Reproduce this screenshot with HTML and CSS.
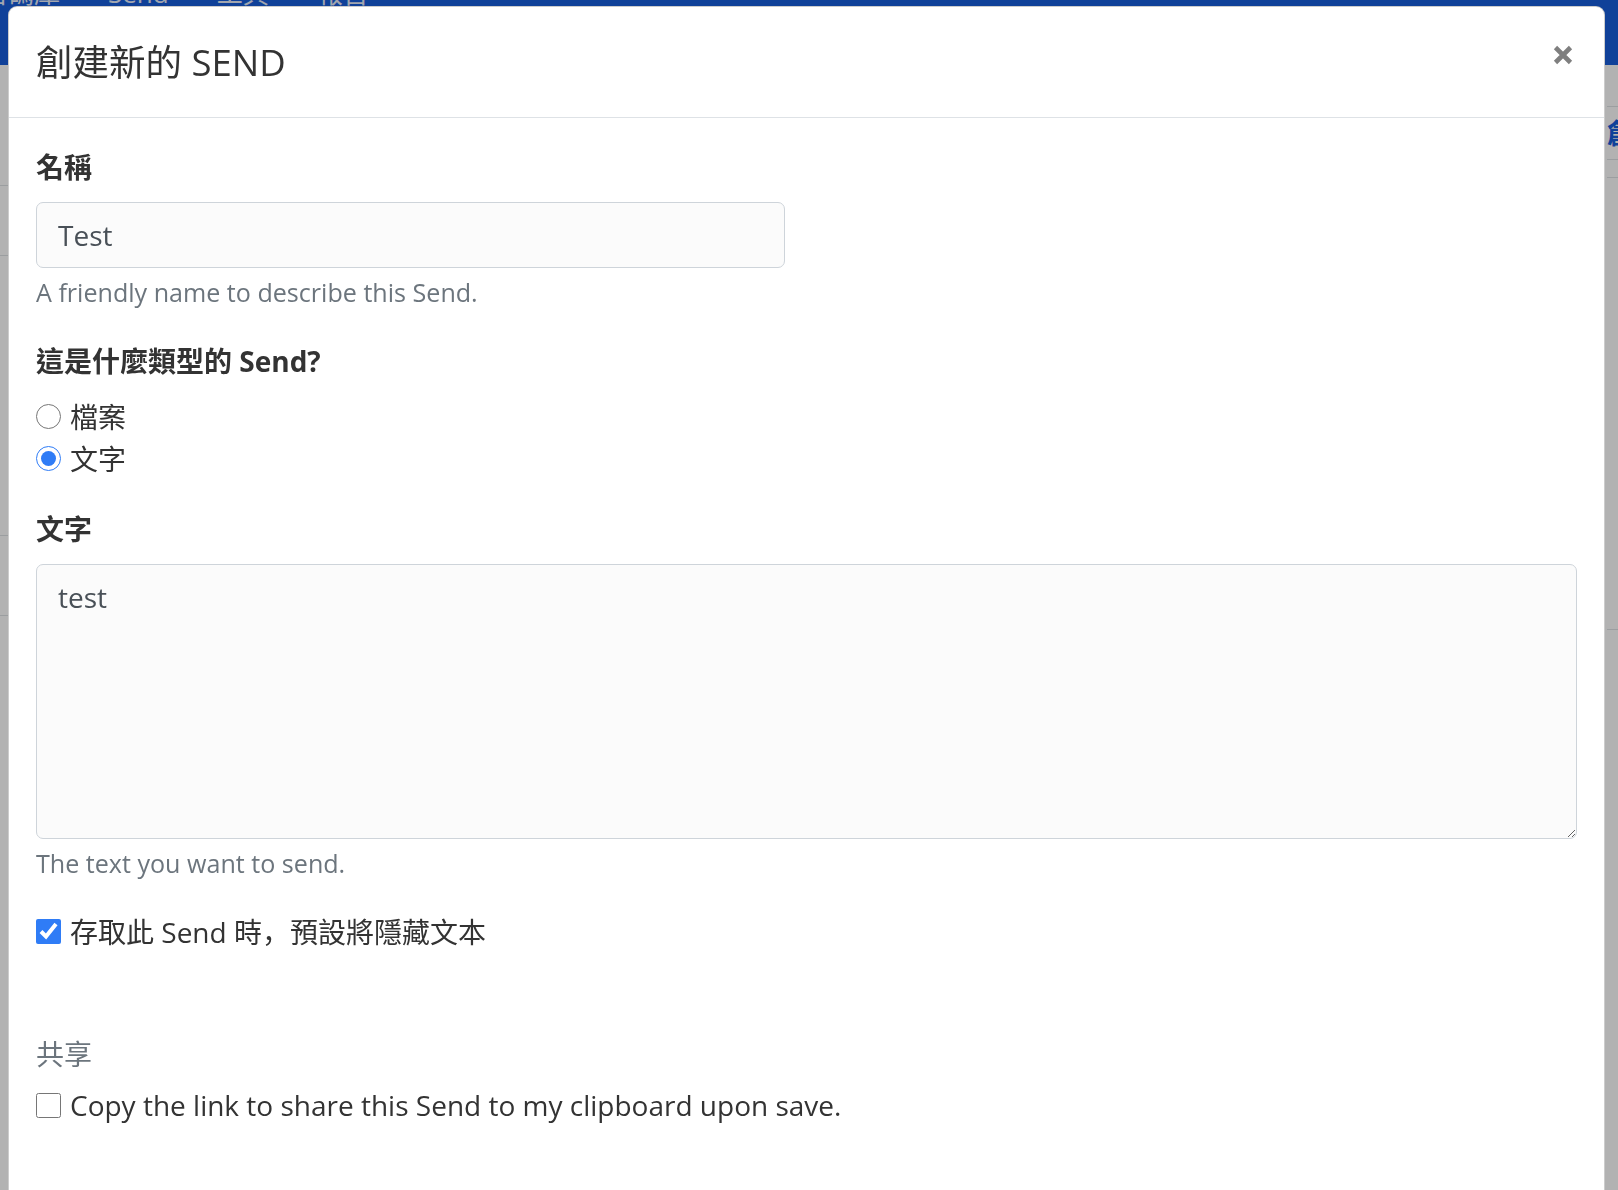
FILE: index.html
```html
<!DOCTYPE html>
<html lang="zh-Hant">
<head>
<meta charset="utf-8">
<title>創建新的 SEND</title>
<link rel="stylesheet" href="styles.css">
</head>
<body>
<div class="page">
  <nav class="navbar">
    <ul class="nav-links">
      <li>密碼庫</li>
      <li>Send</li>
      <li>工具</li>
      <li>報告</li>
    </ul>
  </nav>
  <div class="bg-main">
    <div class="bg-left">
      <div class="bg-row r1"></div>
      <div class="bg-row r2"></div>
      <div class="bg-row r3"></div>
      <div class="bg-row r4"></div>
    </div>
    <div class="bg-center"></div>
    <div class="bg-right">
      <div class="bg-row s1"></div>
      <div class="bg-row s2">創建新的 Send</div>
      <div class="bg-row s3"></div>
      <div class="bg-row s4"></div>
    </div>
  </div>
</div>
<div class="backdrop"></div>
<div class="modal">
  <div class="modal-header">
    <h5 class="modal-title">創建新的 SEND</h5>
    <span class="close" aria-label="Close">
      <svg width="20" height="20" viewBox="0 0 20 20"><path d="M2.5 2.5 L17.5 17.5 M17.5 2.5 L2.5 17.5" stroke="#7f7f7f" stroke-width="4.6" fill="none"/></svg>
    </span>
  </div>
  <div class="modal-body">
    <div class="form-group">
      <label class="label" for="name">名稱</label>
      <input class="form-control name-input" id="name" type="text" value="Test">
      <div class="form-text">A friendly name to describe this Send.</div>
    </div>
    <div class="form-group">
      <div class="label">這是什麼類型的 Send?</div>
      <label class="form-check"><input type="radio" name="type"><span>檔案</span></label>
      <label class="form-check"><input type="radio" name="type" checked><span>文字</span></label>
    </div>
    <div class="form-group">
      <label class="label" for="text">文字</label>
      <textarea class="form-control text-area" id="text">test</textarea>
      <div class="form-text">The text you want to send.</div>
    </div>
    <div class="form-group">
      <label class="form-check"><input type="checkbox" checked><span>存取此 Send 時<span class="punct" lang="zh-Hans">，</span>預設將隱藏文本</span></label>
    </div>
    <h3 class="section-title">共享</h3>
    <label class="form-check"><input type="checkbox"><span>Copy the link to share this Send to my clipboard upon save.</span></label>
  </div>
</div>
</body>
</html>
```
FILE: styles.css
```css
* { box-sizing: border-box; }
html, body { margin: 0; height: 100%; overflow: hidden; }
body {
  font-family: "Open Sans", "Noto Sans CJK TC", sans-serif;
  font-size: 28px;
  line-height: 1.5;
  color: #333;
  background: #fff;
}
.page { height: 100%; }
.navbar {
  height: 65px;
  background: #175ddc;
  overflow: hidden;
}
.nav-links {
  display: flex;
  gap: 48px;
  list-style: none;
  margin: -28px 0 0 -18px;
  padding: 0;
  color: #e8eefb;
  font-size: 26px;
  line-height: 42px;
}
.bg-main { display: flex; }
.bg-left { width: 300px; }
.bg-center { flex: 1; }
.bg-right { width: 12px; padding-left: 1px; overflow: hidden; white-space: nowrap; }
.bg-row { border-bottom: 1px solid #dee2e6; }
.r1 { height: 121px; }
.r2 { height: 70px; }
.r3 { height: 280px; }
.r4 { height: 80px; }
.s1 { height: 42px; }
.s2 { height: 53px; line-height: 53px; color: #175ddc; font-weight: 700; }
.s3 { height: 18px; }
.s4 { height: 452px; }

.backdrop {
  position: fixed;
  inset: 0;
  background: rgba(0, 0, 0, 0.3);
}
.modal {
  position: absolute;
  left: 8px;
  top: 6px;
  right: 13px;
  bottom: -40px;
  background: #fff;
  border: 1px solid rgba(0, 0, 0, 0.2);
  border-radius: 9px 9px 0 0;
}
.modal-header {
  height: 111px;
  display: flex;
  justify-content: space-between;
  align-items: center;
  padding: 0 27px;
  border-bottom: 1px solid #dee2e6;
}
.modal-title {
  margin: 0;
  font-size: 36.5px;
  font-weight: 400;
  line-height: 42px;
  color: #333;
}
.close {
  display: flex;
  align-self: flex-start;
  margin: 38px 4px 0 0;
}
.modal-body { padding: 28px 27px; }
.form-group { margin-bottom: 28px; }
.label {
  display: block;
  font-weight: 700;
  line-height: 42px;
  margin-bottom: 14px;
}
.form-control {
  display: block;
  font-family: inherit;
  font-size: 28px;
  line-height: 42px;
  color: #495057;
  background: #fbfbfb;
  border: 1px solid #ced4da;
  border-radius: 7px;
  padding: 11px 21px;
  margin: 0;
}
.name-input { width: 749px; height: 66px; }
.text-area { width: 100%; height: 275px; resize: vertical; }
.form-text {
  margin-top: 6px;
  font-size: 25.1px;
  line-height: 1.5;
  color: #6c757d;
}
.form-check {
  display: flex;
  align-items: center;
  gap: 9px;
  height: 42px;
}
.form-check input {
  width: 25px;
  height: 25px;
  margin: 0;
  accent-color: #2f7cf6;
  flex: none;
}
.punct { font-family: "Noto Sans CJK SC", sans-serif; }
.section-title {
  margin: 85px 0 13px;
  font-size: 28px;
  font-weight: 400;
  line-height: 34px;
  color: #6c757d;
}
```
